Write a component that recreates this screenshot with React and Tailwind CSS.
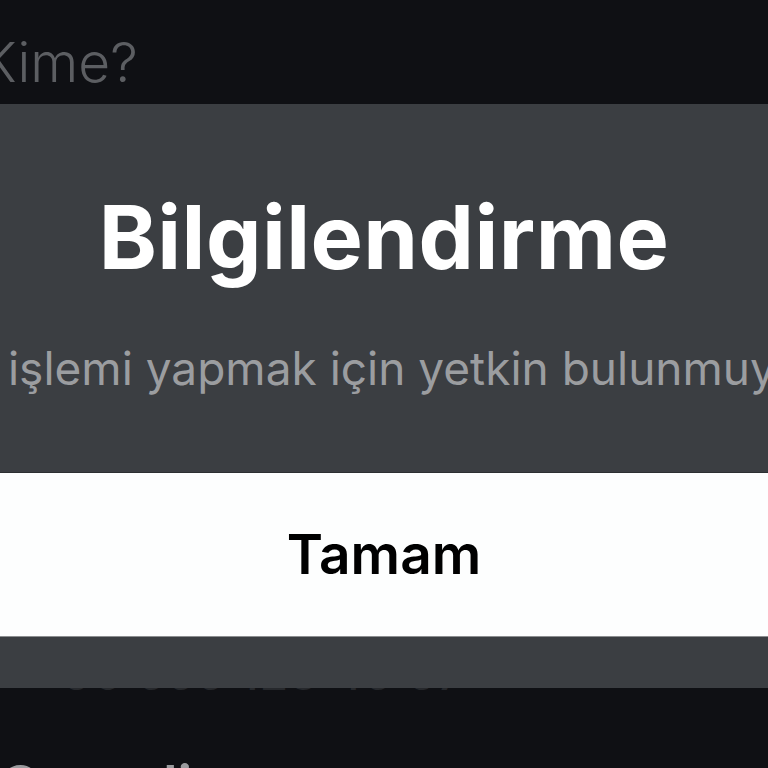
const font = { fontFamily: "Inter, 'Noto Sans', sans-serif" };

function Backdrop() {
  return (
    <div className="flex flex-col pl-[1px]" style={font}>
      <p className="mt-[35px] -ml-[20px] text-[55px] font-light leading-none text-[#5c5e62] whitespace-nowrap">
        Kime?
      </p>
      <p className="mt-[560px] ml-[30px] text-[46px] leading-none font-medium text-[#26282c] whitespace-nowrap tracking-wide">
        +90 555 123 45 67
      </p>
      <p className="mt-[62px] -ml-[2px] text-[56px] leading-none font-semibold text-[#9a9b9e] whitespace-nowrap">
        Geçerli
      </p>
    </div>
  );
}

function InfoDialog({ title, message, action }) {
  return (
    <div className="absolute left-0 right-0 top-[104px] h-[584px] bg-[#3b3e42] flex flex-col" style={font}>
      <div className="h-[368px] flex flex-col items-center overflow-hidden">
        <h2 className="mt-[89px] text-[88px] font-bold leading-none text-white tracking-[0.005em] whitespace-nowrap">
          {title}
        </h2>
        <p className="mt-[64px] text-[46px] leading-none text-[#9b9da0] whitespace-nowrap">
          {message}
        </p>
      </div>
      <div className="h-px bg-[#2c2f32]" />
      <button className="h-[164px] w-full bg-[#fdfefe] flex items-center justify-center text-[55px] font-semibold leading-none text-black border-b border-[#8c8e90]">
        {action}
      </button>
    </div>
  );
}

export default function App() {
  return (
    <div className="relative w-[768px] h-[768px] overflow-hidden bg-[#0f1014]">
      <Backdrop />
      <InfoDialog
        title="Bilgilendirme"
        message="Bu işlemi yapmak için yetkin bulunmuyor."
        action="Tamam"
      />
    </div>
  );
}
